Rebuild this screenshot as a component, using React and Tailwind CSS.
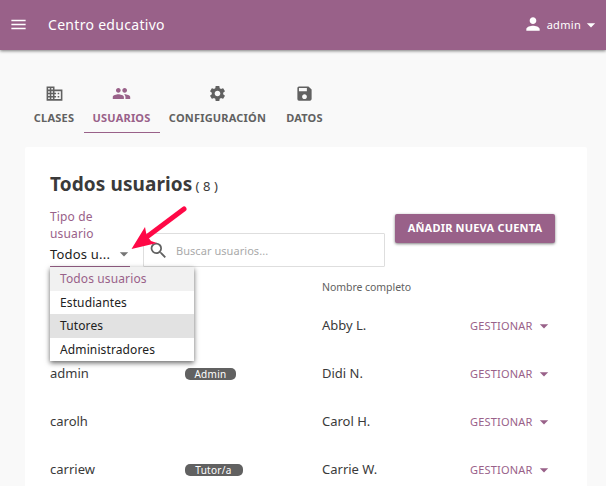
import {
  MdMenu,
  MdDomain,
  MdPeople,
  MdSettings,
  MdSave,
  MdPerson,
  MdArrowDropDown,
  MdSearch,
} from 'react-icons/md';

const tabs = [
  { label: 'CLASES', Icon: MdDomain, width: 'w-[59px]' },
  { label: 'USUARIOS', Icon: MdPeople, width: 'w-[76px]', active: true },
  { label: 'CONFIGURACIÓN', Icon: MdSettings, width: 'w-[116px]' },
  { label: 'DATOS', Icon: MdSave, width: 'w-[58px]' },
];

const options = [
  { label: 'Todos usuarios', style: 'bg-[#f1f1f1] text-[#996189]' },
  { label: 'Estudiantes', style: 'text-[#212121]' },
  { label: 'Tutores', style: 'bg-[#e2e2e2] text-[#212121]' },
  { label: 'Administradores', style: 'text-[#212121]' },
];

const users = [
  { name: 'Abby L.' },
  { user: 'admin', name: 'Didi N.', role: 'Admin', badge: 'w-[51px]' },
  { user: 'carolh', name: 'Carol H.' },
  { user: 'carriew', name: 'Carrie W.', role: 'Tutor/a', badge: 'w-[58px] pr-px' },
];

function Header() {
  return (
    <header className="relative flex h-[50px] shrink-0 items-center bg-[#996189] text-white shadow-[0_1px_3px_rgba(0,0,0,0.5)]">
      <MdMenu className="mb-px ml-[9px] size-[19px]" />
      <h1 className="mb-0.5 ml-5 text-[14px] tracking-[0.3px]">Centro educativo</h1>
      <div className="ml-auto flex items-center pr-[6px]">
        <MdPerson className="mb-[3px] size-[20px]" />
        <span className="ml-[4px] text-[11px] tracking-[0.3px]">admin</span>
        <MdArrowDropDown className="-mr-px mb-px size-[20px]" />
      </div>
    </header>
  );
}

function Tabs() {
  return (
    <nav className="ml-[25px] mt-[34px] flex h-[49px] shrink-0">
      {tabs.map(({ label, Icon, width, active }) => (
        <div
          key={label}
          className={`flex flex-col items-center border-b ${width} ${
            active ? 'border-[#996189] text-[#996189]' : 'border-transparent text-[#616161]'
          }`}
        >
          <Icon className="mr-px size-[19px]" />
          <span className="mt-[7px] mr-px text-[11px] leading-4 font-bold tracking-[0.2px]">{label}</span>
        </div>
      ))}
    </nav>
  );
}

function UserTypeSelect() {
  return (
    <div className="relative w-20">
      <div className="w-[60px] text-[12px] leading-[17px] tracking-[0.15px] text-[#996189]">
        Tipo de usuario
      </div>
      <div className="flex h-[25px] items-center justify-between border-b border-[#996189] text-[13px] text-[#212121]">
        <span className="pt-0.5 tracking-[0.2px]">Todos u...</span>
        <MdArrowDropDown className="-mr-[4px] size-[20px] text-[#757575]" />
      </div>
      <ul className="absolute top-[59px] left-0 z-10 w-36 bg-white shadow-[0_2px_5px_rgba(0,0,0,0.6)]">
        {options.map(({ label, style }) => (
          <li key={label} className={`h-[23.5px] pl-[10px] text-[12px] leading-[23px] tracking-[0.12px] ${style}`}>
            {label}
          </li>
        ))}
      </ul>
      <svg className="absolute -top-[3px] left-[80px] z-20 h-[46px] w-[60px]" viewBox="130 205 60 46">
        <path d="M184 209L148 236" stroke="#ff0846" strokeWidth="5" strokeLinecap="round" />
        <path d="M131.500 249L145 227L146.500 235L151 241L157 243Z" fill="#ff0846" />
      </svg>
    </div>
  );
}

function UserRow({ user, name, role, badge }) {
  return (
    <div className="flex h-12 items-center text-[#3a3a3a]">
      <span className="w-[135px] text-[13px]">{user}</span>
      <span className="w-[137px]">
        {role && (
          <span className={`flex h-3 items-center justify-center rounded-[5px] bg-[#616161] text-[10px] tracking-[0.3px] text-white ${badge}`}>
            {role}
          </span>
        )}
      </span>
      <span className="w-[148px] text-[13px]">{name}</span>
      <span className="flex items-center text-[11px] text-[#996189]">
        <span className="tracking-[0.2px]">GESTIONAR</span>
        <MdArrowDropDown className="mb-px ml-[1px] size-[20px]" />
      </span>
    </div>
  );
}

export default function App() {
  return (
    <div
      className="flex h-[486px] w-[606px] flex-col overflow-hidden bg-[#f9f9f9]"
      style={{ fontFamily: '"Noto Sans", sans-serif' }}
    >
      <Header />
      <Tabs />
      <main className="mt-[14px] mr-[19px] ml-[25px] h-[360px] shrink-0 rounded-[2px] bg-white pt-[25px] pl-[25px]">
        <div className="flex h-6 items-baseline text-[#3a3a3a]">
          <h2 className="text-[19px] leading-6 font-bold tracking-[0.1px]">Todos usuarios</h2>
          <span className="ml-[3px] text-[13px] tracking-[0.1px]">( 8 )</span>
        </div>
        <div className="mt-3 flex">
          <UserTypeSelect />
          <div className="mt-[25px] ml-[13px] flex h-[34px] w-[242px] items-center rounded-[1px] border border-[#dedede]">
            <MdSearch className="ml-[4px] size-[21px] text-[#616161]" />
            <span className="mt-0.5 ml-[7px] text-[11px] tracking-[0.05px] text-[#aaaaaa]">Buscar usuarios...</span>
          </div>
          <button className="mt-[6px] ml-[10px] h-[29px] w-40 rounded-[2px] bg-[#996189] text-[11px] font-bold tracking-[0.2px] text-white shadow-[0_1px_3px_rgba(0,0,0,0.5)]">
            AÑADIR NUEVA CUENTA
          </button>
        </div>
        <div className="mt-[10px] ml-[272px] h-[22px] text-[10.500px] leading-[21px] tracking-[-0.05px] text-[#616161]">
          Nombre completo
        </div>
        <div className="mt-[3px]">
          {users.map((row) => (
            <UserRow key={row.name} {...row} />
          ))}
        </div>
      </main>
    </div>
  );
}
